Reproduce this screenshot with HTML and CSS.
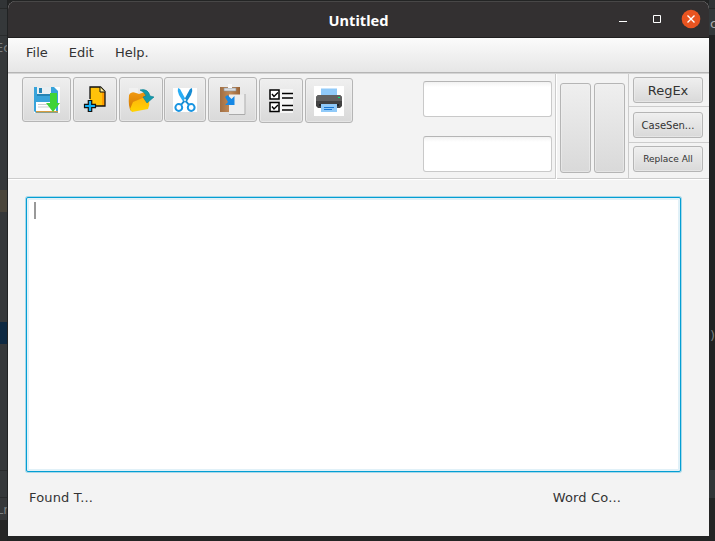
FILE: index.html
```
<!DOCTYPE html>
<html lang="en">
<head>
<meta charset="utf-8">
<title>Untitled</title>
<link rel="stylesheet" href="styles.css">
</head>
<body>
<div class="desktop">
  <div class="strip strip-left"><span class="frag frag-ec">Ec</span><span class="frag frag-ln">Ln</span></div>
  <main class="window">
    <header class="titlebar">
      <h1 class="title">Untitled</h1>
      <div class="controls">
        <svg width="10" height="10" viewBox="0 0 10 10"><path d="M1 7.5H9" stroke="#fff"/></svg>
        <svg width="10" height="10" viewBox="0 0 10 10"><path d="M1.5 1.5H8.5V8.5H1.5Z" fill="none" stroke="#fff"/></svg>
        <svg class="close" width="20" height="20" viewBox="0 0 20 20"><circle cx="10" cy="10" r="9.3" fill="#e95420"/><path d="M6.5 6.5L13.5 13.5M13.5 6.5L6.5 13.5" stroke="#fff" stroke-width="1.4"/></svg>
      </div>
    </header>
    <nav class="menu"><span>File</span><span>Edit</span><span>Help.</span></nav>
    <section class="toolbar">
      <div class="tools">
        <button class="btn w49"><svg width="26" height="26" viewBox="0 0 26 26"><path d="M0 0H26V26H0Z" fill="#fff"/><path d="M0 0H20L24 4V26H2L0 24Z" fill="#38a3da"/><path d="M3 0H17V7H3Z" fill="#e9eff2"/><path d="M5 1H8V6H5Z" fill="#2584b4"/><path d="M3 7H17V9H3Z" fill="#2584b4"/><path d="M2 15H22V24H2Z" fill="#fff"/><path d="M2 24H24V25.5H2Z" fill="#d89c3f"/><path d="M4 17.5H15M4 20H15" stroke="#c9cdd0"/><path d="M16 6H23V16H26L19 25L12 16H16Z" fill="#40d337"/></svg></button>
        <button class="btn w44"><svg width="24" height="27" viewBox="0 0 24 27"><path d="M7 1H18L22 5V20H7Z" fill="#ffc20a"/><path d="M19 6H22V20H19Z" fill="#ff9d00"/><path d="M7 13V1H17.5L22 5.5V20H13" fill="none" stroke="#111" stroke-width="1.3"/><path d="M17 1V6H22" fill="#fff0a0" stroke="#111"/><path d="M5.3 14.5H8.7V18.3H12.5V21.7H8.7V25.5H5.3V21.7H1.5V18.3H5.3Z" fill="#12b0f5" stroke="#111" stroke-width="1.2"/></svg></button>
        <button class="btn w44"><svg width="26" height="26" viewBox="0 0 26 26"><defs><linearGradient id="fold" x2="0" y2="1"><stop stop-color="#f29a10"/><stop offset="1" stop-color="#cf7600"/></linearGradient><linearGradient id="front" x2="0" y2="1"><stop stop-color="#ffb30c"/><stop offset="1" stop-color="#ffd400"/></linearGradient></defs><path d="M1 1H10V6H1Z" fill="#f1f1f1"/><path d="M1 8Q3 4 8 6L11 7L17 5L20 11L3 24Q0 20 1 8Z" fill="url(#fold)"/><path d="M2 22L5 15L17 10L21 13Q22 18 20 22L4 25Z" fill="url(#front)"/><path d="M12 3Q20 1 22 9L26 10L19 16L15 10L18 9Q17 5 12 3Z" fill="#139aac" stroke="#087d91" stroke-width=".6"/></svg></button>
        <button class="btn w42"><svg width="24" height="24" viewBox="0 0 24 24"><path d="M0 0H24V24H0Z" fill="#fff"/><path d="M5 0L7 1L13 12L11 15L6 7Q4 3 5 0Z" fill="#28adf5"/><path d="M19 0L17 1L11 12L13 15L18 7Q20 3 19 0Z" fill="#168bd2"/><path d="M12 12L8 17M12 12L16 17" stroke="#168bd2" stroke-width="2"/><circle cx="5.8" cy="19.5" r="3.4" fill="none" stroke="#1995e2" stroke-width="2"/><circle cx="18.2" cy="19.5" r="3.4" fill="none" stroke="#1995e2" stroke-width="2"/><circle cx="12" cy="12" r="1.2" fill="#c7e1ee"/></svg></button>
        <button class="btn w49"><svg width="27" height="31" viewBox="0 0 27 31"><defs><linearGradient id="wood" x2="1"><stop stop-color="#a06e43"/><stop offset=".5" stop-color="#c28a57"/><stop offset="1" stop-color="#9a6336"/></linearGradient></defs><path d="M1 3H21V28H1Z" fill="url(#wood)"/><path d="M5 4H17V7H5Z" fill="#d9dde2" stroke="#8c9298" stroke-width=".6"/><path d="M9 0H13V4H9Z" fill="#f8f8f8"/><path d="M10 10.5H26.5V30.5H10Z" fill="#ededed"/><path d="M26 10V30.5H10" fill="none" stroke="#aaa"/><path d="M6 13L8.5 11L12.5 15L15.5 12V21H6L9 18Z" fill="#1688e5"/></svg></button>
        <button class="btn w44 lower"><svg width="24" height="24" viewBox="0 0 24 24"><path d="M11 0H24V24H11Z" fill="#f5f5f5"/><path d="M1 1H10V10H1ZM1 13.5H10V22.5H1Z" fill="#fff" stroke="#000" stroke-width="1.5"/><path d="M3 5L5 7.5L9 3.5M3 17.5L5 20L9 16" fill="none" stroke="#000" stroke-width="1.4"/><path d="M13 4.5H24M13 9H24M13 16.5H24M13 21H24" stroke="#000" stroke-width="1.3"/></svg></button>
        <button class="btn w48 lower"><svg width="30" height="30" viewBox="0 0 30 30"><path d="M0 0H30V30H0Z" fill="#fff"/><path d="M7 2.5H23V9H7Z" fill="#90caf9"/><path d="M4 9H26L28 11V20L26 22H4L2 20V11Z" fill="#424242"/><path d="M4 9H26L28 11V15H2V11Z" fill="#616161"/><path d="M5 18H25V20H5Z" fill="#20262b"/><path d="M7 18H23V26H7Z" fill="#90caf9"/><path d="M10 21.5H20M10 23.5H18" stroke="#1976d2"/><path d="M24 11.5H26" stroke="#00e676"/></svg></button>
      </div>
      <div class="fields"><input aria-label="Find"><input aria-label="Replace"></div>
      <div class="steps"><button class="btn"></button><button class="btn"></button></div>
      <div class="options">
        <div class="option"><button class="btn regex">RegEx</button></div>
        <div class="option mid"><button class="btn case">CaseSen...</button></div>
        <div class="option last"><button class="btn replace">Replace All</button></div>
      </div>
    </section>
    <section class="editor"><div class="page"><div class="caret"></div></div></section>
    <footer class="status"><span>Found T...</span><span>Word Co...</span></footer>
  </main>
  <div class="strip strip-right"><span class="frag frag-c">c</span><span class="frag frag-p">)</span></div>
</div>
</body>
</html>
```

FILE: styles.css
```
* { box-sizing: border-box; }
body { margin: 0; overflow: hidden; font-family: "DejaVu Sans", sans-serif; color: #333; }
.desktop {
  width: 715px; height: 541px; display: grid;
  grid-template-columns: 8px 701px 6px; padding-top: 1px;
  background: #232424;
}
.strip { position: relative; overflow: hidden; height: 540px; color: #7c7f80; font-size: 13px; }
.strip-left {
  margin-top: -1px; border-right: 1px solid #202223; height: 541px;
  background: linear-gradient(#313436 0 8px, #272929 8px 9px, #35383a 9px 35px, #292b2c 35px 36px, #35383a 36px 190px, #4a453b 190px 212px, #35383a 212px 322px, #0d2942 322px 344px, #35383a 344px 470px, #292b2c 470px 471px, #35383a 471px 497px, #292b2c 497px 498px, #36383a 498px 520px, #252525 520px);
}
.strip-right {
  margin-top: -1px; height: 541px;
  background: linear-gradient(#303436 0 8px, #272929 8px 9px, #33383a 9px 35px, #212223 35px 470px, #313436 470px 498px, #232424 498px);
}
.frag { position: absolute; line-height: 16px; }
.frag-ec { left: -5px; top: 40px; }
.frag-ln { left: -4px; top: 502px; }
.frag-c { left: 1px; top: 16px; color: #aaa; }
.frag-p { left: 1px; top: 328px; }
.window {
  height: 535px; display: grid; grid-template-rows: 37px 35px 107px 1fr 64px;
  background: #f3f3f3; border-radius: 8px 8px 0 0; overflow: hidden;
}
.titlebar {
  display: grid; grid-template-columns: 1fr auto 1fr; align-items: center;
  background: #333031; border-top: 1px solid #484747; border-bottom: 1px solid #201f1f;
}
.title { grid-column: 2; margin: 0; font: bold 14.6px/20px "Noto Sans", sans-serif; color: #fff; transform: translateY(-.5px); }
.controls { display: flex; align-items: center; justify-content: flex-end; gap: 24px; padding-right: 8px; margin-top: -1px; }
.close { margin-left: -5px; }
.menu {
  display: flex; gap: 21px; padding: 7px 18px 0; font-size: 13px; line-height: 16px;
  background: linear-gradient(#fbfbfb, #e6e6e6); border-bottom: 1px solid #b5b5b5;
}
.toolbar {
  display: grid; grid-template-columns: 415px 133px 73px 80px;
  border-top: 1px solid #d4d4d4; border-bottom: 1px solid #fff;
  box-shadow: inset 0 -1px #ccc;
}
.tools { display: flex; gap: 1.8px; align-items: flex-start; padding: 3px 0 0 14px; }
.btn {
  display: flex; align-items: center; justify-content: center; padding: 0;
  border: 1px solid #b5b5b5; border-radius: 3px; color: #333;
  background: linear-gradient(#efefef, #d9d9d9); box-shadow: inset 0 0 0 1px #f2f2f280;
  font-family: "DejaVu Sans", sans-serif; white-space: nowrap;
}
.tools .btn { height: 45px; flex: none; }
.w49 { width: 49px; }
.w44 { width: 44px; }
.w42 { width: 42px; }
.w48 { width: 48px; }
.tools .lower { margin-top: 1px; }
.fields { display: flex; flex-direction: column; gap: 19px; padding: 7px 4px 0 0; border-right: 1px solid #ccc; }
.fields input {
  width: 129px; height: 36px; border: 1px solid #c9c9c9; border-top-color: #b5b5b5;
  border-radius: 3px; background: linear-gradient(#f2f2f2, #fff 5px); outline: 0;
}
.steps { display: flex; gap: 3px; padding: 9px 3px 6px 3px; border-left: 1px solid #fff; border-right: 1px solid #ccc; }
.steps .btn { width: 31px; height: 90px; }
.options { display: grid; grid-template-rows: 33px 36px 36px; }
.option { padding: 3px 6px 0 4px; border-bottom: 1px solid #ccc; }
.option .btn { width: 70px; height: 26px; }
.mid { padding-top: 5px; }
.last { padding-top: 3px; }
.regex { font-size: 13px; }
.case { font-size: 10px; }
.replace { font-size: 9px; }
.editor { padding: 17px 28px 0 18px; }
.page {
  height: 275px; padding: 4px 7px; background: #fff;
  border: 1px solid #039ed3; border-radius: 2px;
  box-shadow: 0 0 0 1px #a8d8e9, inset 0 0 0 2px #e1f1f8;
}
.caret { width: 2px; height: 17px; background: #999; }
.status { display: flex; justify-content: space-between; padding: 18px 88px 0 21px; font-size: 13px; letter-spacing: .15px; line-height: 16px; }
```
